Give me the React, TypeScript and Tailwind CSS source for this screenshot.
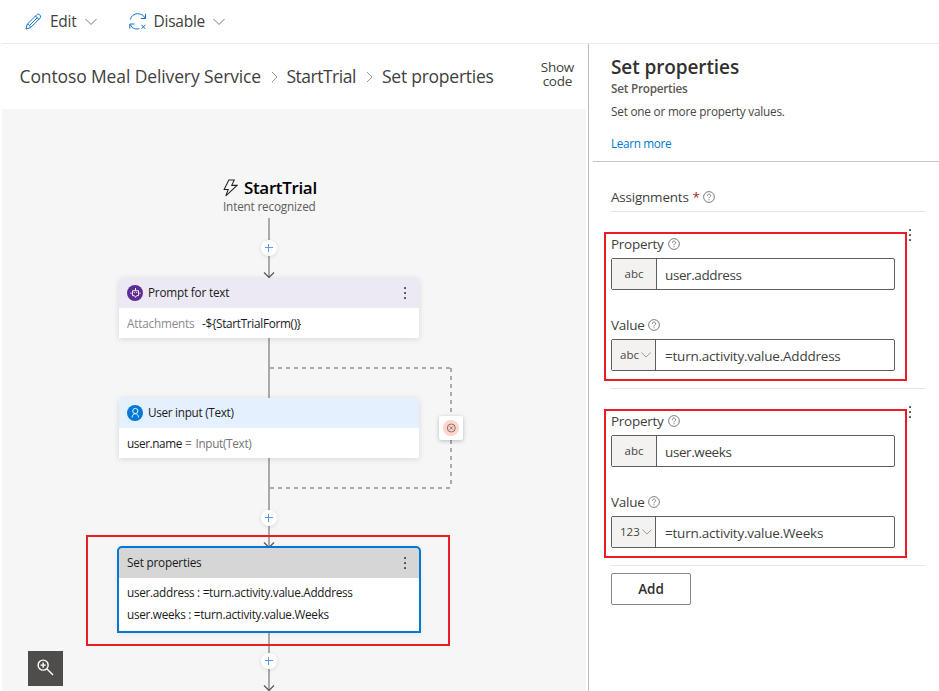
import type { ReactNode } from 'react';

function ChevronDown({ className = '' }: { className?: string }) {
  return (
    <svg className={className} width="12" height="8" viewBox="0 0 12 8" fill="none" stroke="currentColor">
      <path d="M0.5 1 6 6.5 11.5 1" />
    </svg>
  );
}

function ChevronRight() {
  return (
    <svg width="7" height="12" viewBox="0 0 7 12" fill="none" stroke="#9a9896">
      <path d="M1 1 6 6 1 11" />
    </svg>
  );
}

function Help() {
  return (
    <svg width="12" height="12" viewBox="0 0 12 12" fill="none" stroke="#605e5c" strokeWidth="0.8">
      <circle cx="6" cy="6" r="5.4" />
      <path d="M4.4 4.8C4.4 2.6 7.6 2.6 7.6 4.7 7.6 5.8 6 5.9 6 7.3M6 8.2V9.2" />
    </svg>
  );
}

function Dots() {
  return (
    <svg width="4" height="12" viewBox="0 0 4 12" fill="#2b2a29">
      <rect x="1.2" y="0.2" width="1.7" height="1.7" />
      <rect x="1.2" y="5.2" width="1.7" height="1.7" />
      <rect x="1.2" y="10.2" width="1.7" height="1.7" />
    </svg>
  );
}

function Plus({ className }: { className: string }) {
  return (
    <div className={`absolute left-[261px] flex h-4 w-4 items-center justify-center rounded-full bg-white shadow-[0_1px_4px_rgba(0,0,0,0.12)] ${className}`}>
      <svg width="8" height="8" viewBox="0 0 8 8" fill="none" stroke="#5a9bf0">
        <path d="M3.5 0V8M0 3.5H8" />
      </svg>
    </div>
  );
}

function Node({ className, header, children }: { className: string; header: ReactNode; children: ReactNode }) {
  return (
    <div className={`absolute left-[119px] w-[300px] rounded-t-[3px] bg-white text-[11.75px] tracking-[-0.2px] text-[#1b1b1b] shadow-[0_1px_6px_rgba(0,0,0,0.13)] ${className}`}>
      {header}
      {children}
    </div>
  );
}

function Field({ label, type, value, menu = false }: { label: string; type: string; value: string; menu?: boolean }) {
  return (
    <div>
      <div className="mb-0.5 flex h-6 items-center gap-1 text-[13.5px] tracking-[-0.27px] text-[#403f3e]">
        <span>{label}</span>
        <Help />
      </div>
      <div className="flex h-8 w-[284px] rounded-[2px] border border-[#605e5c] bg-white">
        <div className={`flex items-center border-r border-[#605e5c] bg-[#f3f2f1] pb-px text-[11.5px] text-[#484644] ${menu ? 'w-11 gap-0.5 pl-2' : 'w-[45px] justify-center'}`}>
          <span>{type}</span>
          {menu && <ChevronDown className="w-[10px] text-[#8a8886]" />}
        </div>
        <span className={`flex items-center pt-0.5 text-[13.5px] text-[#403f3e] ${menu ? 'pl-[9px] tracking-[-0.22px]' : 'pl-2 tracking-[-0.4px]'}`}>{value}</span>
      </div>
    </div>
  );
}

function Assignment({ type, property, value }: { type: string; property: string; value: string }) {
  return (
    <div className="relative flex h-[177px] w-[314px] flex-col border-b border-[#e6e6e6] pt-5">
      <Field label="Property" type="abc" value={property} />
      <div className="h-[23px]" />
      <Field label="Value" type={type} value={value} menu />
      <div className="absolute top-[17px] left-[297px]"><Dots /></div>
      <div className="absolute top-5 -left-[7px] h-[149px] w-[303px] border-2 border-[#ed1c24]" />
    </div>
  );
}

function Toolbar() {
  return (
    <header className="ml-0.5 flex h-11 items-center border-b border-[#eaeaea] pl-[23px] text-[15.5px] tracking-[-0.25px] text-[#403f3e]">
      <svg width="17" height="17" viewBox="0 0 17 17" fill="none" stroke="#1274cc">
        <path d="M1 16 2.2 11.3 11.7 1.8C13.7-.2 17 3 15 5.2L5.5 14.7ZM10.5 3 14 6.5M2.2 11.3C4 11.3 5.4 12.8 5.5 14.7M4.1 12.9 12.4 4.6" />
      </svg>
      <span className="ml-2">Edit</span>
      <ChevronDown className="ml-2 text-[#7a7876]" />
      <svg className="ml-8" width="18" height="17" viewBox="0 0 18 17" fill="none" stroke="#1274cc">
        <path d="M1.3 6.5C3-1 13.3-1 16 5M16.5.8V5.5H11.8M5.5 11H.8V15.7M1.3 11.5C3 15.5 7 17 10.5 15.4M12.5 11.8 16.3 15.8M16.3 11.8 12.5 15.8" />
      </svg>
      <span className="ml-[7px]">Disable</span>
      <ChevronDown className="ml-2 text-[#7a7876]" />
    </header>
  );
}

function Canvas() {
  return (
    <div className="relative ml-0.5 w-[584px] flex-1 overflow-hidden bg-[#f6f6f6]">
      <div className="absolute -top-[109px] -left-0.5 h-[691px] w-[586px]">
        <svg className="absolute inset-0" width="586" height="691" fill="none" stroke="#aaaaaa" strokeWidth="2">
          <path d="M269 218V278M269 338V398M269 458V547M269 633V691" />
          <path d="M270 368H451" strokeDasharray="4 4" />
          <path d="M451 368V488" strokeDasharray="4 4" />
          <path d="M270 488H451" strokeDasharray="4 4" />
          <path d="M264 272.5 269 277.5 274 272.5M264 542.5 269 547.5 274 542.5M264 685.5 269 690.5 274 685.5" stroke="#555" strokeWidth="1.2" />
        </svg>

        <div className="absolute top-[176px] left-[223px] flex items-center whitespace-nowrap">
          <svg width="15" height="20" viewBox="0 0 16 20" fill="none" stroke="#222" strokeWidth="1.1">
            <path d="M6.2 1.5H12L9.3 7.2H15L3 18.3 5.6 11.5H1.2Z" />
          </svg>
          <span className="ml-1.5 text-[17px] leading-6 font-semibold tracking-[-0.35px] text-black">StartTrial</span>
        </div>
        <div className="absolute top-[198px] left-[223px] text-[11.75px] leading-4 tracking-[-0.18px] whitespace-nowrap text-[#605e5c]">Intent recognized</div>

        <Plus className="top-[240px]" />
        <Plus className="top-[510px]" />
        <Plus className="top-[653px]" />

        <Node
          className="top-[278px]"
          header={
            <div className="flex h-[30px] items-center rounded-t-[3px] bg-[#ede9f4] pr-3 pl-2">
              <svg width="16" height="16" viewBox="0 0 16 16" fill="none" stroke="#fff" strokeWidth="0.9">
                <circle cx="8" cy="8" r="8" fill="#5c2e91" stroke="none" />
                <path d="M5.5 5.7H11.5V10.6H9.7L8.5 12.4 7.3 10.6H5.5ZM8.5 3V5.7M4 7.5V9M13 7.5V9M7.3 7V8M9.7 7V8" />
              </svg>
              <span className="ml-[5px]">Prompt for text</span>
              <div className="ml-auto"><Dots /></div>
            </div>
          }
        >
          <div className="flex h-[30px] items-center px-2 pt-0.5">
            <span className="w-[75px] text-[#8a8a8a]">Attachments</span>
            <span className="tracking-[-0.3px]">-${'{'}StartTrialForm(){'}'}</span>
          </div>
        </Node>

        <Node
          className="top-[398px]"
          header={
            <div className="flex h-[30px] items-center rounded-t-[3px] bg-[#e5f0ff] pl-2">
              <svg width="16" height="16" viewBox="0 0 16 16" fill="none" stroke="#fff" strokeWidth="0.9">
                <circle cx="8" cy="8" r="8" fill="#0078d4" stroke="none" />
                <circle cx="8.3" cy="6" r="2.6" />
                <path d="M5.1 12.5C5.2 7.5 11.4 7.5 11.5 12.5" />
              </svg>
              <span className="ml-[5px] tracking-[-0.3px]">User input (Text)</span>
            </div>
          }
        >
          <div className="flex h-[30px] items-center px-2 pt-0.5 tracking-[-0.4px]">
            <span className="w-[58px]">user.name</span>
            <span className="w-[10.5px] text-[#757575]">=</span>
            <span className="tracking-[-0.32px] text-[#757575]">Input(Text)</span>
          </div>
        </Node>

        <div className="absolute top-[416px] left-[439px] flex h-6 w-6 items-center justify-center rounded-[2px] bg-white shadow-[0_1px_4px_rgba(0,0,0,0.25)]">
          <svg width="16" height="16" viewBox="0 0 16 16" fill="none" stroke="#6d5550" strokeWidth="0.8">
            <circle cx="8" cy="8" r="8" fill="#fdd5ca" stroke="none" />
            <circle cx="8.3" cy="8" r="4" />
            <path d="M6.7 6.4 9.9 9.6M9.9 6.4 6.7 9.6" />
          </svg>
        </div>

        <Node
          className="top-[548px] outline-2 outline-[#0078d4]"
          header={
            <div className="flex h-[30px] items-center rounded-t-[1px] bg-[#d6d6d6] pr-3 pl-2">
              <span className="tracking-[-0.2px]">Set properties</span>
              <div className="ml-auto"><Dots /></div>
            </div>
          }
        >
          <div className="h-[53px] px-2 pt-[3px] leading-[22px] tracking-[-0.29px]">
            <p>user.address : =turn.activity.value.Adddress</p>
            <p>user.weeks : =turn.activity.value.Weeks</p>
          </div>
        </Node>
        <div className="absolute top-[535px] left-[86px] h-[111px] w-[364px] border-2 border-[#ed1c24]" />
        <div className="absolute top-[651px] left-7 flex h-[35px] w-[35px] items-center justify-center bg-[#4f4d4c]">
          <svg className="-mt-0.5 -ml-px" width="17" height="17" viewBox="0 0 18 18" fill="none" stroke="#fff" strokeWidth="1.5">
            <circle cx="6.5" cy="6.5" r="5.3" />
            <path d="M10.3 10.3 17 17M6.5 3.7V9.3M3.7 6.5H9.3" />
          </svg>
        </div>
      </div>
    </div>
  );
}

export default function App() {
  return (
    <div className="flex h-[691px] w-[939px] flex-col overflow-hidden bg-white font-['Open_Sans',sans-serif]">
      <Toolbar />
      <div className="flex min-h-0 flex-1">
        <main className="flex w-[588px] flex-col">
          <div className="flex h-[65px] items-center pl-[19.5px] text-[17.5px] tracking-[-0.25px] whitespace-nowrap text-[#403f3e]">
            <span className="w-[251px] tracking-[-0.12px]">Contoso Meal Delivery Service</span>
            <ChevronRight />
            <span className="ml-[9px] w-[79.5px] tracking-[-0.5px]">StartTrial</span>
            <ChevronRight />
            <span className="ml-[9px]">Set properties</span>
            <span className="mt-[-6px] mr-3.5 ml-auto text-center text-[13.5px] leading-[14px]">Show<br />code</span>
          </div>
          <Canvas />
        </main>
        <aside className="flex flex-1 flex-col border-l border-[#bdbdbd]">
          <div className="ml-1 flex h-[118px] flex-col border-b border-[#c8c6c4] pl-[18px] text-[11.75px] text-[#484644]">
            <h1 className="mt-2.5 text-[19px] leading-[26px] font-semibold tracking-[-0.1px] text-[#323130]">Set properties</h1>
            <h2 className="leading-4 font-semibold tracking-[-0.25px] text-[#5a5856]">Set Properties</h2>
            <p className="mt-[7px] leading-4 tracking-[-0.2px]">Set one or more property values.</p>
            <a className="mt-4 leading-4 tracking-[-0.35px] text-[#0078d4]">Learn more</a>
          </div>
          <div className="flex flex-col pl-[22px]">
            <div className="flex h-[50px] w-[314px] items-end border-b border-[#e6e6e6] pb-1 text-[13.5px] tracking-[-0.22px] text-[#403f3e]">
              <span>Assignments</span>
              <span className="ml-1 text-[#a4262c]">*</span>
              <div className="mb-1 ml-[3px]"><Help /></div>
            </div>
            <Assignment type="abc" property="user.address" value="=turn.activity.value.Adddress" />
            <Assignment type="123" property="user.weeks" value="=turn.activity.value.Weeks" />
            <button className="mt-[7px] h-8 w-20 rounded-[2px] border border-[#8a8886] text-[13.5px] font-semibold text-[#323130]">Add</button>
          </div>
        </aside>
      </div>
    </div>
  );
}
